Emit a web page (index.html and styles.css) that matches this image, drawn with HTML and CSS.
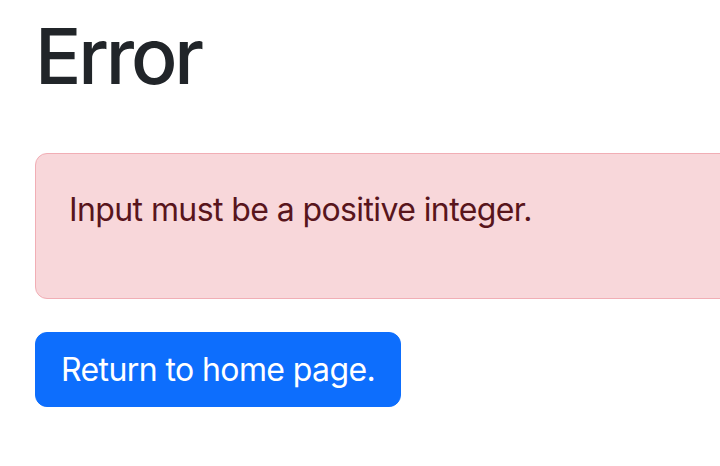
FILE: index.html
```html
<!DOCTYPE html>
<html lang="en">

<head>
  <meta charset="UTF-8">
  <meta name="viewport" content="width=device-width, initial-scale=1.0">
  <title>Error</title>
  <link rel="stylesheet" href="styles.css">
</head>

<body>
  <div class="page">
    <h1 class="title">Error</h1>
    <div class="alert">
      <p>Input must be a positive integer.</p>
    </div>
    <a class="btn" href="#">Return to home page.</a>
  </div>
</body>

</html>
```

FILE: styles.css
```css
body {
  margin: 0;
  font-family: Inter, "Liberation Sans", sans-serif;
  font-size: 32px;
  line-height: 1.5;
  letter-spacing: -0.6px;
  color: #212529;
  background: #fff;
  overflow: hidden;
}

.page {
  padding-left: 35px;
  width: 820px;
}

.title {
  font-size: 77px;
  font-weight: 500;
  line-height: 92px;
  letter-spacing: -3.2px;
  margin: 0 0 51px;
  padding-top: 10px;
}

.alert {
  background-color: #f8d7da;
  border: 1px solid #f1aeb5;
  border-radius: 12px;
  color: #58151c;
  padding: 32px 33px;
  margin-bottom: 33px;
}

.alert p {
  margin: 0 0 32px;
}

.btn {
  display: inline-block;
  background-color: #0d6efd;
  border: 1px solid #0d6efd;
  border-radius: 12px;
  color: #fff;
  text-decoration: none;
  padding: 13px 25px 12px;
}
```
